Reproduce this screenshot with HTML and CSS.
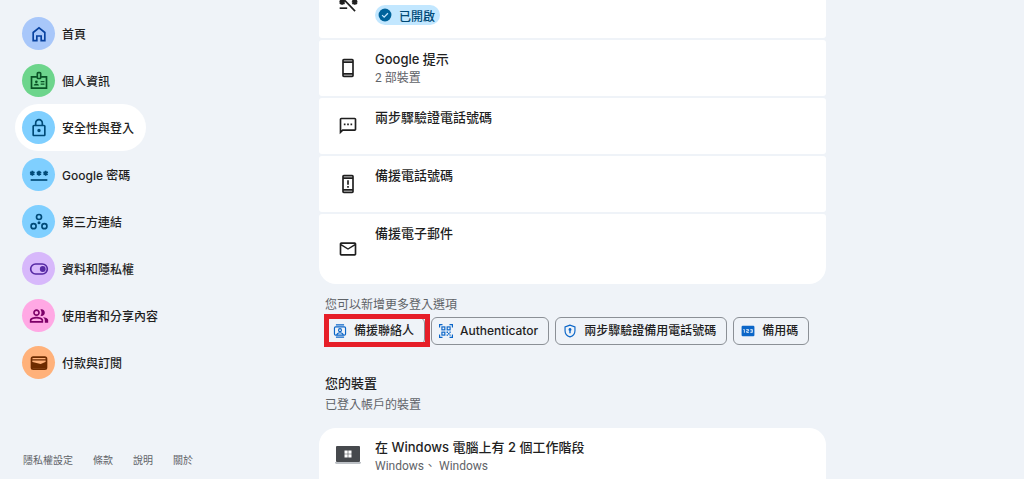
FILE: index.html
```html
<!DOCTYPE html>
<html lang="zh-Hant">
<head>
    <meta charset="UTF-8">
    <meta name="viewport" content="width=device-width, initial-scale=1.0">
    <title>Google 帳戶 - 安全性與登入</title>
    <link rel="stylesheet" href="styles.css">
</head>
<body>
    <div class="page">
        <aside class="sidebar">
            <nav class="nav">
                <a class="nav-item" href="#home">
                    <span class="nav-icon blue"><svg viewBox="0 0 24 24"><path d="M5 10.2 12 4.6l7 5.6V20h-4.4v-5.6H9.4V20H5z" fill="none" stroke="currentColor" stroke-width="2"/></svg></span>
                    首頁
                </a>
                <a class="nav-item" href="#personal">
                    <span class="nav-icon green"><svg viewBox="0 0 24 24"><g fill="none" stroke="currentColor" stroke-width="2"><path d="M9.5 7H3v13.500h18V7h-6.500"/><rect x="10" y="2" width="4" height="7" rx="1"/></g><circle cx="8.800" cy="13" r="1.600"/><path d="M5.600 17.500c0-1.600 1.500-2.300 3.200-2.300s3.200.7 3.200 2.300zM14 12h4.500v1.500H14zM14 15h4.500v1.500H14z"/></svg></span>
                    個人資訊
                </a>
                <a class="nav-item active" href="#security">
                    <span class="nav-icon sky"><svg viewBox="0 0 24 24"><path d="M18 8h-1V6c0-2.760-2.240-5-5-5S7 3.240 7 6v2H6c-1.100 0-2 .9-2 2v10c0 1.100.9 2 2 2h12c1.100 0 2-.9 2-2V10c0-1.100-.9-2-2-2zM9 6c0-1.660 1.340-3 3-3s3 1.340 3 3v2H9V6zm9 14H6V10h12v10zm-6-3c1.100 0 2-.9 2-2s-.9-2-2-2-2 .9-2 2 .9 2 2 2z"/></svg></span>
                    安全性與登入
                </a>
                <a class="nav-item" href="#passwords">
                    <span class="nav-icon sky"><svg viewBox="0 0 24 24"><path d="M2 17h20v2H2z"/><path d="M4 7v6M1.400 8.500l5.200 3M6.600 8.500l-5.200 3M12 7v6M9.400 8.500l5.200 3M14.600 8.500l-5.200 3M20 7v6M17.400 8.500l5.200 3M22.600 8.500l-5.200 3" fill="none" stroke="currentColor" stroke-width="2"/></svg></span>
                    Google 密碼
                </a>
                <a class="nav-item" href="#connections">
                    <span class="nav-icon sky"><svg viewBox="0 0 24 24"><g fill="none" stroke="currentColor" stroke-width="2"><circle cx="12" cy="6" r="3"/><circle cx="5.500" cy="17" r="3"/><circle cx="18.500" cy="17" r="3"/></g><circle cx="12" cy="13" r="1.800"/></svg></span>
                    第三方連結
                </a>
                <a class="nav-item" href="#privacy">
                    <span class="nav-icon purple"><svg viewBox="0 0 24 24"><rect x="2" y="6" width="20" height="12" rx="6" fill="none" stroke="currentColor" stroke-width="2"/><circle cx="16.500" cy="12" r="3.500"/></svg></span>
                    資料和隱私權
                </a>
                <a class="nav-item" href="#sharing">
                    <span class="nav-icon pink"><svg viewBox="0 0 24 24"><path d="M9 12c2.200 0 4-1.800 4-4s-1.800-4-4-4-4 1.800-4 4 1.800 4 4 4zm0-6c1.100 0 2 .9 2 2s-.9 2-2 2-2-.9-2-2 .9-2 2-2zM9 13c-2.700 0-8 1.300-8 4v3h16v-3c0-2.700-5.300-4-8-4zm6 5H3v-1c0-.7 3-2 6-2s6 1.300 6 2zM15 12c2.200 0 4-1.800 4-4s-1.800-4-4-4c-.5 0-.9.1-1.300.2C14.500 5.300 15 6.600 15 8s-.5 2.700-1.300 3.800c.4.1.8.2 1.300.2zM16.700 13.100C18.100 14 19 15.300 19 17v3h4v-3c0-2.200-3.500-3.500-6.300-3.900z"/></svg></span>
                    使用者和分享內容
                </a>
                <a class="nav-item" href="#payments">
                    <span class="nav-icon orange"><svg viewBox="0 0 24 24"><rect x="3" y="5" width="18" height="14.500" rx="2" fill="none" stroke="currentColor" stroke-width="2"/><path d="M3 7.500h18V9H3zM3 10.500l11 2.800 7-3V19H3z"/></svg></span>
                    付款與訂閱
                </a>
            </nav>
            <footer class="footer">
                <a href="#policy">隱私權設定</a>
                <a href="#terms">條款</a>
                <a href="#help">說明</a>
                <a href="#about">關於</a>
            </footer>
        </aside>

        <main class="content">
            <section class="card-list">
                <a class="card card-first" href="#skip-password">
                    <svg class="card-icon" viewBox="0 0 24 24"><path d="M2 16h9v2H2z"/><path d="M5 6v7M2 8l6 3.500M8 8l-6 3.500M20 6v7M17 8l6 3.500M23 8l-6 3.500" fill="none" stroke="currentColor" stroke-width="2.600"/><path d="M6 5.500 20.500 20.500" fill="none" stroke="currentColor" stroke-width="2"/></svg>
                    <span class="status">
                        <svg class="status-icon" viewBox="0 0 24 24"><circle cx="12" cy="12" r="11"/><path d="m7 12.200 3.500 3.500L17 9" fill="none" stroke="#c2e7ff" stroke-width="2.200"/></svg>
                        已開啟
                    </span>
                </a>
                <a class="card" href="#prompts">
                    <svg class="card-icon" viewBox="0 0 24 24"><path d="M17 1H7c-1.100 0-2 .9-2 2v18c0 1.100.9 2 2 2h10c1.100 0 2-.9 2-2V3c0-1.100-.9-2-2-2zm0 20H7v-1h10zm0-3H7V6h10zm0-14H7V3h10z"/></svg>
                    <span class="card-text">
                        <span class="card-title">Google 提示</span>
                        <span class="card-sub">2 部裝置</span>
                    </span>
                </a>
                <a class="card" href="#two-step-phone">
                    <svg class="card-icon" viewBox="0 0 24 24"><path d="M20 2H4c-1.100 0-2 .9-2 2v18l4-4h14c1.100 0 2-.9 2-2V4c0-1.100-.9-2-2-2zm0 14H5.200L4 17.200V4h16zM7 9h2v2H7zM11 9h2v2h-2zM15 9h2v2h-2z"/></svg>
                    <span class="card-text"><span class="card-title">兩步驟驗證電話號碼</span></span>
                </a>
                <a class="card" href="#recovery-phone">
                    <svg class="card-icon" viewBox="0 0 24 24"><path d="M17 1H7c-1.100 0-2 .9-2 2v18c0 1.100.9 2 2 2h10c1.100 0 2-.9 2-2V3c0-1.100-.9-2-2-2zm0 20H7v-1h10zm0-3H7V6h10zm0-14H7V3h10zM11 7.500h2v5.500h-2zM11 14.500h2v2h-2z"/></svg>
                    <span class="card-text"><span class="card-title">備援電話號碼</span></span>
                </a>
                <a class="card card-last" href="#recovery-email">
                    <svg class="card-icon" viewBox="0 0 24 24"><path d="M20 4H4c-1.100 0-2 .9-2 2v12c0 1.100.9 2 2 2h16c1.100 0 2-.9 2-2V6c0-1.100-.9-2-2-2zm0 14H4V8l8 5 8-5zm-8-7L4 6h16z"/></svg>
                    <span class="card-text"><span class="card-title">備援電子郵件</span></span>
                </a>
            </section>

            <section class="options">
                <p class="hint">您可以新增更多登入選項</p>
                <div class="chips">
                    <button class="chip highlight" type="button">
                        <svg class="chip-icon" viewBox="0 0 24 24"><g fill="none" stroke="currentColor" stroke-width="2"><rect x="2.500" y="5" width="19" height="14" rx="2"/><path d="M5 1.500h14M5 22.500h14M6.500 19c.5-3 3-4 5.500-4s5 1 5.500 4"/><circle cx="12" cy="10.500" r="2.500"/></g></svg>
                        備援聯絡人
                    </button>
                    <button class="chip" type="button">
                        <svg class="chip-icon" viewBox="0 0 24 24"><g fill="none" stroke="currentColor" stroke-width="2"><path d="M1 6V1h5M18 1h5v5M1 18v5h5M23 18v5h-5"/><rect x="5" y="5" width="5" height="5"/><rect x="14" y="5" width="5" height="5"/><rect x="5" y="14" width="5" height="5"/></g><path d="M13 13h2.500v2.500H13zM15.500 15.500H18V18h-2.500zM18 13h2v2.500h-2zM13 18h2.500v2H13zM18 18h2v2h-2z"/></svg>
                        Authenticator
                    </button>
                    <button class="chip" type="button">
                        <svg class="chip-icon" viewBox="0 0 24 24"><path d="M12 2 3.500 5v6.500c0 5 3.500 9 8.500 10.500 5-1.500 8.500-5.500 8.500-10.500V5z" fill="none" stroke="currentColor" stroke-width="2"/><path d="M12 7a2.500 2.500 0 0 0-1.200 4.700V16h2.400v-4.300A2.500 2.500 0 0 0 12 7z"/></svg>
                        兩步驟驗證備用電話號碼
                    </button>
                    <button class="chip" type="button">
                        <svg class="chip-icon" viewBox="0 0 24 24"><rect x="1" y="3" width="22" height="18" rx="2"/><path d="M4 9.500h1.800v5.500M9 9.500h4v2.500H9.800v2.500h3.700M16 9.500h3.500v5H16M16.500 12h3" fill="none" stroke="#fff" stroke-width="1.300"/></svg>
                        備用碼
                    </button>
                </div>
            </section>

            <section class="devices">
                <h2 class="section-title">您的裝置</h2>
                <p class="hint">已登入帳戶的裝置</p>
                <a class="card device-card" href="#devices">
                    <svg class="device-icon" viewBox="0 0 26 20"><rect x="1" y="1" width="24" height="16" rx="1" fill="#46494d"/><path d="M0 17h26v1l-1 1H1l-1-1z" fill="#bdc1c6"/><path d="M9.500 5.500h3.200v3.200H9.500zM13.300 5.500h3.200v3.200h-3.200zM9.500 9.300h3.200v3.200H9.500zM13.300 9.300h3.200v3.200h-3.200z" fill="#fff"/></svg>
                    <span class="card-text">
                        <span class="card-title">在 Windows 電腦上有 2 個工作階段</span>
                        <span class="card-sub">Windows、 Windows</span>
                    </span>
                </a>
            </section>
        </main>
    </div>
</body>
</html>
```

FILE: styles.css
```css
* {
    box-sizing: border-box;
}

body {
    margin: 0;
    height: 100vh;
    overflow: hidden;
    background-color: #eff3f8;
    color: #1f1f1f;
    font-family: Inter, "Noto Sans CJK TC", sans-serif;
    font-size: 12px;
}

a {
    color: inherit;
    text-decoration: none;
}

svg {
    fill: currentColor;
    flex: none;
}

.page {
    display: grid;
    grid-template-columns: 319px minmax(0, 507px);
    grid-template-rows: 100%;
    height: 100%;
}

/* Sidebar */
.sidebar {
    display: flex;
    flex-direction: column;
    justify-content: space-between;
    padding: 10px 15px;
}

.nav {
    display: flex;
    flex-direction: column;
    align-items: flex-start;
}

.nav-item {
    display: flex;
    align-items: center;
    gap: 7px;
    height: 47px;
    padding: 0 12px 0 7px;
    border-radius: 24px;
    font-weight: 500;
}

.nav-item.active {
    background-color: #fff;
}

.nav-icon {
    display: flex;
    align-items: center;
    justify-content: center;
    width: 33px;
    height: 33px;
    border-radius: 50%;
}

.nav-icon svg {
    width: 20px;
    height: 20px;
}

.blue {
    background-color: #a8c7fa;
    color: #0842a0;
}

.green {
    background-color: #6dd58c;
    color: #0a5326;
}

.sky {
    background-color: #7fcfff;
    color: #004a77;
}

.purple {
    background-color: #d7b8fb;
    color: #5629a4;
}

.pink {
    background-color: #ffa8e4;
    color: #7d0068;
}

.orange {
    background-color: #ffb17a;
    color: #6d2b00;
}

.footer {
    display: flex;
    gap: 20px;
    padding-left: 8px;
    color: #5f6368;
    font-size: 10px;
    line-height: 18px;
}

/* Content */
.card-list {
    display: flex;
    flex-direction: column;
    gap: 2px;
}

.card {
    display: flex;
    align-items: center;
    min-height: 56px;
    padding: 0 19px;
    border-radius: 3px;
    background-color: #fff;
}

.card-first {
    align-items: flex-start;
    min-height: 38px;
    border-radius: 0 0 3px 3px;
}

.card-last {
    min-height: 70px;
    border-radius: 3px 3px 17px 17px;
}

.card-icon {
    width: 20px;
    height: 20px;
    margin-right: 17px;
}

.card-first .card-icon {
    margin-top: -6px;
}

.card-text {
    display: flex;
    flex-direction: column;
    align-self: flex-start;
    padding-top: 9px;
}

.card-title {
    font-size: 13px;
    font-weight: 500;
    line-height: 20px;
}

.card-sub {
    color: #5f6368;
    font-family: Roboto, "Noto Sans CJK TC", sans-serif;
    line-height: 18px;
}

.status {
    display: flex;
    align-items: center;
    gap: 7px;
    height: 20px;
    margin-top: 5px;
    padding: 0 5px 0 3px;
    border-radius: 10px;
    background-color: #c2e7ff;
    color: #004a77;
    font-weight: 500;
}

.status-icon {
    width: 14px;
    height: 14px;
    color: #00639b;
}

.options {
    padding: 12px 0 0 6px;
}

.hint {
    margin: 0;
    color: #5f6368;
    line-height: 18px;
}

.chips {
    display: flex;
    gap: 6px;
    margin-top: 3px;
}

.chip {
    position: relative;
    display: flex;
    align-items: center;
    gap: 7px;
    height: 28px;
    padding: 0 10px 0 7px;
    border: 1px solid #8b9096;
    border-radius: 6px;
    background: none;
    color: #1f1f1f;
    font-family: inherit;
    font-size: 12px;
    font-weight: 500;
    line-height: 18px;
    white-space: nowrap;
}

.chip-icon {
    width: 14px;
    height: 14px;
    color: #0b66c8;
}

/* Red frame drawn over the chip */
.highlight::after {
    content: "";
    position: absolute;
    inset: -4px -6px -3px -2px;
    border: 5px solid #e61e28;
}

.devices {
    padding-top: 28px;
}

.section-title {
    margin: 0;
    padding-left: 6px;
    font-size: 13px;
    font-weight: 500;
    line-height: 20px;
}

.devices .hint {
    margin-top: 3px;
    padding-left: 6px;
}

.device-card {
    min-height: 70px;
    margin-top: 14px;
    padding-left: 16px;
    border-radius: 17px;
}

.device-icon {
    align-self: flex-start;
    width: 26px;
    height: 20px;
    margin-top: 17px;
    margin-right: 14px;
}
```
